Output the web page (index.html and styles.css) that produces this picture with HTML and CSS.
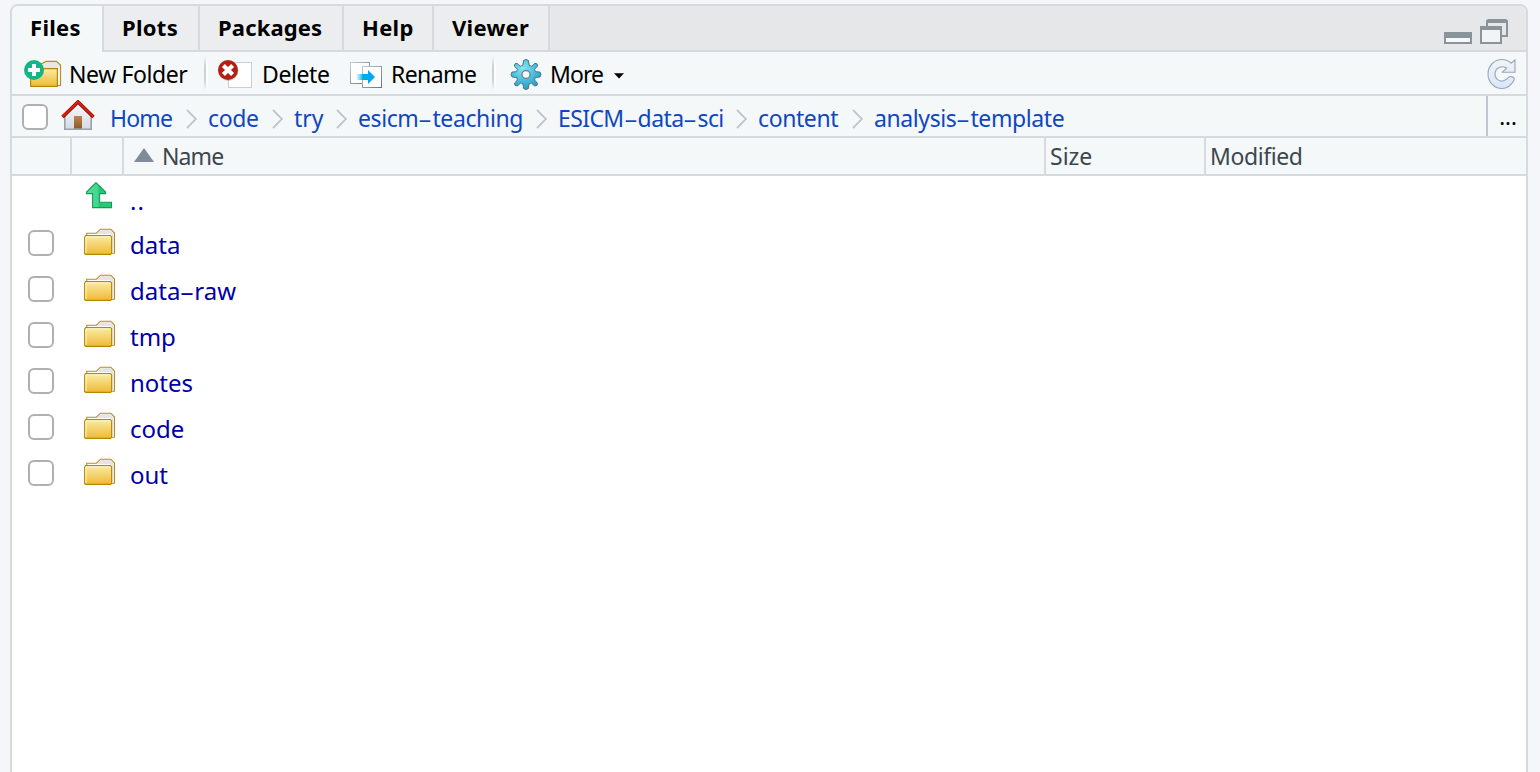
FILE: index.html
```
<!DOCTYPE html>
<html lang="en">
<head>
<meta charset="utf-8">
<title>Files</title>
<link rel="stylesheet" href="styles.css">
</head>
<body>
<svg class="defs" width="0" height="0" aria-hidden="true">
  <defs>
    <linearGradient id="gold" x1="0" y1="0" x2="0" y2="1"><stop offset="0" stop-color="#f7eda6"/><stop offset="1" stop-color="#efb936"/></linearGradient>
    <linearGradient id="wall" x1="0" y1="0" x2="0" y2="1"><stop offset="0" stop-color="#f8f8fa"/><stop offset="1" stop-color="#d5d9e2"/></linearGradient>
    <linearGradient id="door" x1="0" y1="0" x2="0" y2="1"><stop offset="0" stop-color="#bd8650"/><stop offset="1" stop-color="#8c5b29"/></linearGradient>
    <linearGradient id="grn" x1="0" y1="0" x2="1" y2="0"><stop offset="0" stop-color="#4fe09a"/><stop offset=".45" stop-color="#43d68e"/><stop offset=".5" stop-color="#27c578"/><stop offset="1" stop-color="#2bc97c"/></linearGradient>
    <linearGradient id="blue"><stop offset="0" stop-color="#00a8f0" stop-opacity="0"/><stop offset=".4" stop-color="#00a8f0"/></linearGradient>
    <radialGradient id="cog" cx=".4" cy=".3" r=".75"><stop offset="0" stop-color="#86e6f5"/><stop offset=".5" stop-color="#4cc1df"/><stop offset="1" stop-color="#2b95bf"/></radialGradient>
    <linearGradient id="sheet" x1="0" y1="0" x2="1" y2="1"><stop offset="0" stop-color="#c3cad2"/><stop offset="1" stop-color="#69727f"/></linearGradient>
    <linearGradient id="ref" x1="0" y1="0" x2="0" y2="1"><stop offset="0" stop-color="#f1f4fa"/><stop offset="1" stop-color="#d9e6fa"/></linearGradient>
    <symbol id="folder" viewBox="0 0 32 28">
      <path d="M2.7 8V5.2H12.5L16.5 1.2H26.8L30.5 5V25.2H26" fill="#fffdf5" stroke="#b78e16" stroke-width="1.1"/>
      <path d="M13.5 6L17 2H26.3L29.7 5.5V24.5H28V7.5L26 6Z" fill="#e3e5e6"/>
      <path d="M.6 9L1.6 7.6H26.6L27.6 9V25.4L26.6 26.4H1.6L.6 25.4Z" fill="url(#gold)" stroke="#b88900" stroke-width="1.1"/>
      <path d="M2 25V8.8H26.3" fill="none" stroke="#fff8cf" stroke-width="1"/>
    </symbol>
    <symbol id="chev" viewBox="0 0 12 20"><path d="M2 1.5L11 10L2 18.5" fill="none" stroke="#fff" stroke-width="2"/><path d="M1 1L10 10L1 19" fill="none" stroke="#c1c6ce" stroke-width="1.9"/></symbol>
  </defs>
</svg>
<main class="pane">
  <nav class="tabs">
    <a class="tab active files">Files</a><a class="tab plots">Plots</a><a class="tab packages">Packages</a><a class="tab help">Help</a><a class="tab viewer">Viewer</a>
    <svg class="window-icons" width="66" height="28" viewBox="0 0 66 28">
      <rect x="1" y="15" width="26" height="10" fill="#f6f8f9" stroke="#89939a" stroke-width="2"/><path d="M0 20V16l2-2h24l2 2v4Z" fill="#89939a"/>
      <path d="M43 8V3L45 2H61L63 3V18H58" fill="#e6e7e9" stroke="#89939a" stroke-width="2"/><path d="M42 5V3l2-2h18l2 2v2Z" fill="#89939a"/>
      <rect x="37" y="9" width="20" height="16" fill="#f1f3f4" stroke="#89939a" stroke-width="2"/><path d="M36 12v-2l2-2h18l2 2v2Z" fill="#89939a"/>
    </svg>
  </nav>
  <div class="toolbar">
    <button class="tool new-folder">
      <svg width="40" height="34" viewBox="0 0 40 34">
        <path d="M13 8L19 5L22 3.4H32.5L36.5 7V27.5H32" fill="#e5e8e8" stroke="#b78e16" stroke-width="1.2"/><path d="M34 10V26.8H35.6V9Z" fill="#fffdf2"/>
        <path d="M6.6 10.6H33.4V28.4H6.6Z" fill="url(#gold)" stroke="#b88900" stroke-width="1.2"/>
        <circle cx="10" cy="12" r="10" fill="#14b487"/><path d="M10 6V18M4 12H16" stroke="#fff" stroke-width="4"/>
      </svg><span>New Folder</span>
    </button>
    <i class="sep"></i>
    <button class="tool delete">
      <svg width="34" height="34" viewBox="0 0 34 34">
        <rect x="10.5" y="4.5" width="23" height="25" fill="#fff" stroke="#c7ced8"/>
        <circle cx="10.5" cy="13" r="10" fill="#777" opacity=".35"/><circle cx="10" cy="12" r="10" fill="#b21f15"/><path d="M5.4 7.4L14.6 16.6M14.6 7.4L5.4 16.6" stroke="#fff" stroke-width="4.2"/>
      </svg><span>Delete</span>
    </button>
    <button class="tool rename">
      <svg width="32" height="34" viewBox="0 0 32 34">
        <rect x=".5" y="4.5" width="19" height="21" fill="#fff" stroke="url(#sheet)"/><rect x="12.5" y="8.5" width="19" height="21" fill="#fff" stroke="url(#sheet)"/>
        <path d="M6 16H18V12L25 19L18 26V22H6Z" fill="url(#blue)"/>
      </svg><span>Rename</span>
    </button>
    <i class="sep"></i>
    <button class="tool more">
      <svg width="32" height="34" viewBox="-16 -16.5 32 34">
        <path id="gear" d="M-2.4 -14Q0 -16 2.4 -14L3.2 -9.2Q4.8 -8.8 5.8 -8.2L9 -11.2Q11.8 -11.4 11.5 -8.4L8.5 -5.2Q9.2 -4 9.4 -2.8L14 -2.4Q16 0 14 2.4L9.4 3Q9.1 4.4 8.5 5.4L11.5 8.8Q11.6 11.8 8.6 11.4L5.4 8.6Q4.3 9.2 3 9.5L2.4 14Q0 16 -2.4 14L-3 9.5Q-4.3 9.2 -5.4 8.6L-8.6 11.4Q-11.6 11.8 -11.5 8.8L-8.5 5.4Q-9.1 4.4 -9.4 3L-14 2.4Q-16 0 -14 -2.4L-9.4 -2.8Q-9.2 -4 -8.5 -5.2L-11.5 -8.4Q-11.8 -11.4 -9 -11.2L-5.8 -8.2Q-4.8 -8.8 -3.2 -9.2Z" fill="url(#cog)" stroke="#477385" stroke-width="1"/>
        <circle r="4" fill="#f8fbfc" stroke="#6f8690" stroke-width="1.4"/>
      </svg><span>More</span><svg class="caret" width="10" height="6"><path d="M0 .3H10L5 5.5Z"/></svg>
    </button>
    <svg class="refresh" width="30" height="32" viewBox="0 0 30 32">
      <path d="M28 2V14.2H15.5L19.6 10C17.5 8.7 15 8.2 12.4 9.3C7.5 11.5 6.6 17.8 10 21.1C13.5 24.4 18.5 23.4 21.3 19.5C23.5 17.5 28 19 27.2 22C24.5 27 20 30.5 15 30.5C7 30.5 1 23.5 1 16C1 8 7.2 1.5 15 1.5C18.5 1.5 22 3 24 5.2Z" fill="url(#ref)" stroke="#9aa5b5" stroke-width="1.1"/>
    </svg>
  </div>
  <div class="path">
    <span class="box"></span>
    <svg class="home" width="34" height="32" viewBox="0 0 34 32">
      <path d="M4 15L17 3L30 15V30H4Z" fill="url(#wall)"/><path d="M3.8 16V29.2H30.2V16" fill="none" stroke="#97a2ad" stroke-width="1.6"/>
      <rect x="13" y="16" width="8" height="12.5" fill="url(#door)"/>
      <path d="M1.5 17L17 2L32.5 17" fill="none" stroke="#74160d" stroke-width="3.6"/><path d="M1.5 16.7L17 1.8L32.5 16.7" fill="none" stroke="#e71b05" stroke-width="2.1"/>
    </svg>
    <a class="c1">Home</a><svg class="chev"><use href="#chev"/></svg><a class="c2">code</a><svg class="chev"><use href="#chev"/></svg><a class="c3">try</a><svg class="chev"><use href="#chev"/></svg><a class="c4">esicm<i class="dash">-</i>teaching</a><svg class="chev"><use href="#chev"/></svg><a class="c5">ESICM<i class="dash">-</i>data<i class="dash">-</i>sci</a><svg class="chev"><use href="#chev"/></svg><a class="c6">content</a><svg class="chev"><use href="#chev"/></svg><a class="c7">analysis<i class="dash">-</i>template</a>
    <button class="dots">...</button>
  </div>
  <div class="head">
    <span></span><span></span>
    <span class="name"><svg width="20" height="14"><path d="M0 14L10 0L20 14Z" fill="#818b9a"/></svg><b>Name</b></span>
    <span class="size">Size</span><span class="modified">Modified</span>
  </div>
  <div class="rows">
    <div class="row up"><span></span><svg class="up-icon" width="28" height="28" viewBox="0 0 28 28"><path d="M10 .6L19.6 10V11.6H13.6V20.2H25.5V25.6H6.6V11.6H.6V10Z" fill="url(#grn)" stroke="#159b59" stroke-width="1.1"/></svg><a>..</a></div>
    <div class="row"><span class="box"></span><svg class="folder"><use href="#folder"/></svg><a>data</a></div>
    <div class="row"><span class="box"></span><svg class="folder"><use href="#folder"/></svg><a>data<i class="dash">-</i>raw</a></div>
    <div class="row"><span class="box"></span><svg class="folder"><use href="#folder"/></svg><a>tmp</a></div>
    <div class="row"><span class="box"></span><svg class="folder"><use href="#folder"/></svg><a>notes</a></div>
    <div class="row"><span class="box"></span><svg class="folder"><use href="#folder"/></svg><a>code</a></div>
    <div class="row"><span class="box"></span><svg class="folder"><use href="#folder"/></svg><a>out</a></div>
  </div>
</main>
</body>
</html>
```
FILE: styles.css
```
* { box-sizing: border-box; }
body { margin: 0; padding: 4px 12px 0 10px; height: 772px; overflow: hidden; background: #f4f6f9; font: 23px/30px "Noto Sans", "Open Sans", sans-serif; color: #000; }
svg { flex: none; display: block; }
.defs { position: absolute; }
.pane { height: 780px; border: 2px solid #d6dadc; border-radius: 8px 8px 0 0; background: #fff; overflow: hidden; }
.tabs { height: 46px; display: flex; background: #e6e7e9; box-shadow: inset 0 -2px #d6dadc; }
.tab { height: 44px; padding: 6px 0 0 18px; border-right: 2px solid #d6dadc; background: #ecedee; font-weight: 700; font-size: 22px; letter-spacing: .3px; white-space: nowrap; }
.active { height: 46px; background: #f4f8f9; }
.files { width: 92px; }
.plots { width: 96px; }
.packages { width: 144px; letter-spacing: .15px; }
.help { width: 90px; }
.viewer { width: 116px; }
.window-icons { margin: 12px 16px 0 auto; }
.toolbar { height: 44px; display: flex; border-bottom: 2px solid #d6dadc; background: #f4f8f9; }
.tool { display: flex; flex: none; padding: 0; border: 0; background: none; font: inherit; color: inherit; letter-spacing: -.4px; white-space: nowrap; }
.tool > svg:first-child { margin-top: 6px; }
.tool span { margin-top: 7px; }
.new-folder { width: 180px; padding-left: 12px; }
.new-folder span { margin-left: 5px; }
.sep { flex: none; width: 4px; height: 34px; margin: 4px 0 0 12px; background: linear-gradient(90deg, #cdd2d5 0 2px, #fcfdfd 2px); -webkit-mask-image: linear-gradient(transparent, #000 30%, #000 70%, transparent); mask-image: linear-gradient(transparent, #000 30%, #000 70%, transparent); }
.delete { width: 131px; padding-left: 10px; }
.delete span { margin-left: 10px; }
.rename { width: 141px; padding-left: 11px; letter-spacing: -.6px; }
.rename span { margin-left: 9px; }
.more { padding-left: 14px; letter-spacing: -.9px; }
.more span { margin-left: 8px; }
.caret { margin: 21px 0 0 11px; }
.refresh { margin: 6px 9px 0 auto; }
.path { height: 42px; display: flex; border-bottom: 2px solid #d6dadc; background: #f4f8f9; color: #1046c0; letter-spacing: -.4px; }
.path a { flex: none; margin-top: 7px; white-space: nowrap; }
.box { flex: none; width: 26px; height: 26px; border: 2px solid #b0b0b0; border-radius: 6px; background: #fff; }
.path .box { margin: 8px 0 0 10px; }
.home { margin: 4px 15px 0 13px; }
.chev { width: 12px; height: 20px; margin: 13px 10px 0 14px; }
.c1 { width: 62px; letter-spacing: -.8px; } .c2 { width: 50px; } .c3 { width: 28px; letter-spacing: 0; } .c4 { width: 164px; } .c5 { width: 164px; letter-spacing: -.6px; } .c6 { width: 80px; }
.dash { display: inline-block; width: 14px; text-align: center; font-style: normal; letter-spacing: 0; transform: scale(1.9, .95); }
.dots { width: 40px; margin-left: auto; padding: 0 0 0 2px; border: 0; border-left: 2px solid #c1c6ce; background: none; font: inherit; font-size: 22px; }
.head { height: 38px; display: grid; grid-template-columns: 60px 52px 922px 160px 1fr; border-bottom: 2px solid #d6dadc; background: #f4f8f9; color: #3c474d; }
.head > span { padding: 3px 0 0 4px; border-right: 2px solid #d6dadc; }
.head > span:last-child { border: 0; }
.head .name { display: flex; padding-left: 10px; letter-spacing: -.9px; }
.name svg { margin: 7px 8px 0 0; }
.name b { font-weight: 400; }
.modified { letter-spacing: -.4px; }
.row { height: 46px; display: grid; grid-template-columns: 72px 46px 1fr; color: #0000a6; font-size: 24px; }
.up { height: 44px; }
.row .box { margin: 10px 0 0 16px; }
.folder { width: 32px; height: 28px; margin-top: 8px; }
.up-icon { margin: 6px 0 0 2px; }
.row a { margin-top: 10px; }
.up a { letter-spacing: 1px; }
```
